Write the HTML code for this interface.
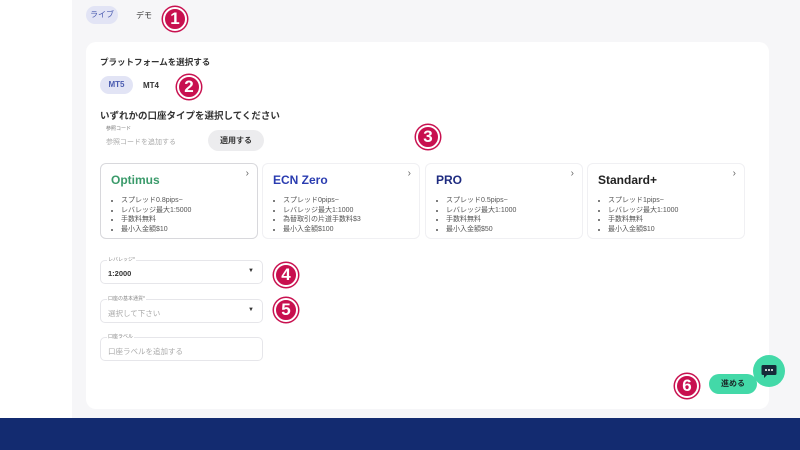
<!DOCTYPE html>
<html><head><meta charset="utf-8"><style>
*{margin:0;padding:0;box-sizing:border-box}
body{width:800px;height:450px;overflow:hidden;background:#fff;font-family:"Liberation Sans","Noto Sans CJK JP",sans-serif;position:relative;color:#333}
.gray{position:absolute;left:72px;top:0;width:728px;height:418px;background:#f6f6f8}
.navy{position:absolute;left:0;top:418px;width:800px;height:32px;background:#132b70}
.card{position:absolute;left:86px;top:42px;width:683px;height:367px;background:#fff;border-radius:10px}
.abs{position:absolute}
.pill{position:absolute;border-radius:12px;font-size:8px;text-align:center}
.num{position:absolute;width:24px;height:24px;border-radius:50%;background:#c8104f;border:2px solid #fff;box-shadow:0 0 0 1.5px #c8104f;color:#fff;font-weight:bold;font-size:17px;line-height:20px;text-align:center}
.acc{position:absolute;top:163px;width:158px;height:76px;background:#fff;border-radius:6px;border:1px solid #f0f0f3}
.acc h3{position:absolute;left:10px;top:9px;font-size:12px;font-weight:bold}
.acc .ch{position:absolute;right:8px;top:4px;font-size:10px;color:#666}
.acc ul{position:absolute;left:20px;top:32px;font-size:7px;color:#555;line-height:9.5px;list-style:disc}
.field{position:absolute;left:100px;width:163px;height:24px;border:1px solid #e6e6ea;border-radius:5px;background:#fff}
.field .lb{position:absolute;left:6px;top:-5px;font-size:5px;color:#888;background:#fff;padding:0 1px}
.field .v{position:absolute;left:7px;top:8px;font-size:7.5px}
.field .ar{position:absolute;right:8px;top:7px;font-size:6px}
</style></head><body>
<div class="gray"></div>
<div class="navy"></div>
<div class="pill" style="left:86px;top:6px;width:32px;height:18px;line-height:18px;background:#e2e4f5;color:#4a5bb0">ライブ</div>
<div class="abs" style="left:136px;top:10px;font-size:8px">デモ</div>
<div class="num" style="left:163px;top:7px">1</div>
<div class="card"></div>
<div class="abs" style="left:100px;top:56px;font-size:8.5px;font-weight:bold">プラットフォームを選択する</div>
<div class="pill" style="left:100px;top:76px;width:33px;height:18px;line-height:18px;background:#e2e4f5;color:#4a5bb0;font-weight:bold">MT5</div>
<div class="abs" style="left:143px;top:81px;font-size:8px;font-weight:bold">MT4</div>
<div class="num" style="left:177px;top:75px">2</div>
<div class="abs" style="left:100px;top:108px;font-size:9.5px;font-weight:bold">いずれかの口座タイプを選択してください</div>
<div class="abs" style="left:106px;top:125px;font-size:5px;color:#777">参照コード</div>
<div class="abs" style="left:106px;top:137px;font-size:7px;color:#aaa">参照コードを追加する</div>
<div class="pill" style="left:208px;top:130px;width:56px;height:21px;line-height:21px;background:#ececee;font-weight:bold;border-radius:11px">適用する</div>
<div class="num" style="left:416px;top:125px">3</div>
<div class="acc" style="left:100px;border:1px solid #d8d8dc"><h3 style="color:#3a9a6a">Optimus</h3><span class="ch">›</span><ul><li>スプレッド0.8pips~</li><li>レバレッジ最大1:5000</li><li>手数料無料</li><li>最小入金額$10</li></ul></div>
<div class="acc" style="left:262px"><h3 style="color:#2a3cb0">ECN Zero</h3><span class="ch">›</span><ul><li>スプレッド0pips~</li><li>レバレッジ最大1:1000</li><li>為替取引の片道手数料$3</li><li>最小入金額$100</li></ul></div>
<div class="acc" style="left:425px"><h3 style="color:#1e2b80">PRO</h3><span class="ch">›</span><ul><li>スプレッド0.5pips~</li><li>レバレッジ最大1:1000</li><li>手数料無料</li><li>最小入金額$50</li></ul></div>
<div class="acc" style="left:587px"><h3 style="color:#222">Standard+</h3><span class="ch">›</span><ul><li>スプレッド1pips~</li><li>レバレッジ最大1:1000</li><li>手数料無料</li><li>最小入金額$10</li></ul></div>
<div class="field" style="top:260px"><span class="lb">レバレッジ*</span><span class="v" style="font-weight:bold">1:2000</span><span class="ar">▼</span></div>
<div class="num" style="left:274px;top:263px">4</div>
<div class="field" style="top:299px"><span class="lb">口座の基本通貨*</span><span class="v" style="color:#aaa">選択して下さい</span><span class="ar">▼</span></div>
<div class="num" style="left:274px;top:298px">5</div>
<div class="field" style="top:337px"><span class="lb">口座ラベル</span><span class="v" style="color:#aaa">口座ラベルを追加する</span></div>
<div class="num" style="left:675px;top:374px">6</div>
<div class="pill" style="left:709px;top:374px;width:48px;height:20px;line-height:20px;background:#43d9a8;font-weight:bold;border-radius:10px;color:#1a2a2a">進める</div>
<div class="abs" style="left:753px;top:355px;width:32px;height:32px;border-radius:50%;background:#43d9a8"><svg width="32" height="32" style="position:absolute;left:0;top:0"><path d="M10 10h12a1.5 1.5 0 0 1 1.5 1.5v7a1.5 1.5 0 0 1-1.5 1.5h-8l-3 3v-3h-1a1.5 1.5 0 0 1-1.5-1.5v-7A1.5 1.5 0 0 1 10 10z" fill="#152a3a"/><circle cx="13" cy="15" r="1" fill="#fff"/><circle cx="16" cy="15" r="1" fill="#fff"/><circle cx="19" cy="15" r="1" fill="#fff"/></svg></div>
</body></html>
